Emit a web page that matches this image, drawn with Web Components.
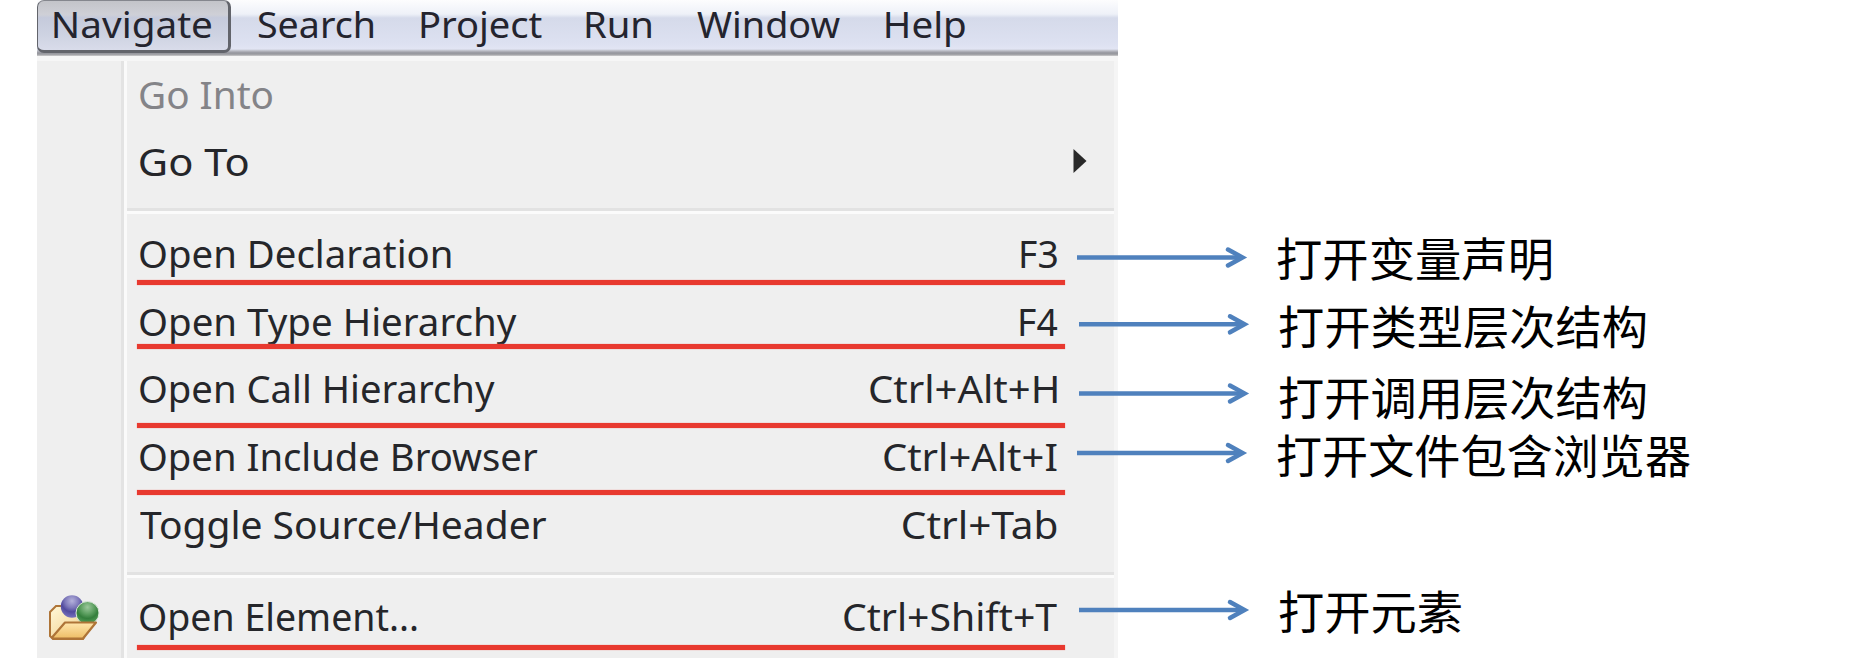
<!DOCTYPE html>
<html lang="zh">
<head>
<meta charset="utf-8">
<title>Navigate menu</title>
<style>
html,body{margin:0;height:100%;overflow:hidden;background:#fff}
body{font-family:"Noto Sans","Noto Sans CJK SC",sans-serif}
</style>
</head>
<body>
<guide-page></guide-page>
<script>
const define = (name, html, setup) => {
  const tpl = document.createElement('template');
  tpl.innerHTML = html;
  customElements.define(name, class extends HTMLElement {
    connectedCallback() {
      if (this.shadowRoot) return;
      this.attachShadow({mode: 'open'}).append(tpl.content.cloneNode(true));
      if (setup) setup(this, this.shadowRoot);
    }
  });
};

/* Text whose visible ink fills exactly the width given in "w". */
define('fit-text', `<style>
:host{display:block;flex:none;white-space:pre}
span{display:inline-block;transform-origin:0 50%}
</style><span></span>`, (el, root) => {
  const span = root.querySelector('span'), text = el.getAttribute('text'), w = +el.getAttribute('w');
  const cs = getComputedStyle(el);
  const ctx = document.createElement('canvas').getContext('2d');
  ctx.font = cs.fontSize + ' ' + cs.fontFamily;
  const m = ctx.measureText(text);
  const s = w / (m.actualBoundingBoxLeft + m.actualBoundingBoxRight);
  span.textContent = text;
  el.style.width = w + 'px';
  span.style.transform = `scaleX(${s}) translateX(${m.actualBoundingBoxLeft}px)`;
});

const barText = (t, w) => `<fit-text text="${t}" w="${w}"></fit-text>`;

define('menu-bar', `<style>
:host{display:block;height:56px;background:linear-gradient(#fdfdfe 0,#eef1f8 14px,#e2e6f1 16px,#d5daea 18px,#dde1f1 44px,#e2e5f4 49px,#b7b8c0 51px,#93949b 53px,#a8a8ac 55px,#d5d5d5 56px)}
nav{display:flex;height:56px;font-size:37px;line-height:48px;color:#24242e}
.on{box-sizing:border-box;width:194px;height:53px;padding-left:16px;margin-right:27px;border:2px solid #62646b;border-top-color:#85878e;border-width:1px 3px 3px 1px;border-radius:7px;
 background:linear-gradient(#c3c4c9,#cfd0d7 28%,#c5cadb 34%,#ced3e2 70%,#d9dcea);line-height:46px}
</style><nav><div class="on">${barText('Navigate',157)}</div>
${barText('Search',115)}<i style="width:48px"></i>${barText('Project',121)}<i style="width:44px"></i>${barText('Run',65)}<i style="width:46px"></i>${barText('Window',143)}<i style="width:46px"></i>${barText('Help',79)}</nav>`);

define('menu-row', `<style>
:host{display:flex;position:relative;height:67.5px;flex:none;line-height:69px;font-size:38px;color:#25262a}
:host([disabled]){color:#848488}
.gutter{width:103px;flex:none;display:flex;align-items:center}
.keys{margin-left:auto;margin-right:61px}
.arrow{margin:1px 30px 0 auto;align-self:center}
.mark{position:absolute;left:100px;width:928px;height:5px;background:#e8392f;box-shadow:0 0 1px #ef8a84}
</style><div class="gutter"><slot></slot></div>`, (el, root) => {
  const a = n => el.getAttribute(n);
  let h = `<fit-text text="${a('label')}" w="${a('w')}"></fit-text>`;
  if (a('keys')) h += `<fit-text class="keys" text="${a('keys')}" w="${a('kw')}"></fit-text>`;
  if (el.hasAttribute('submenu')) h += `<svg class="arrow" width="16" height="26" viewBox="0 0 16 26"><path d="M1.500 1 14.500 13 1.500 25Z" fill="#292929"/></svg>`;
  if (a('mark')) h += `<div class="mark" style="top:${a('mark')}px"></div>`;
  root.querySelector('.gutter').insertAdjacentHTML('afterend', h);
});

define('menu-separator', `<style>
:host{display:flex;flex:none;flex-direction:column;height:24.800px}
div{margin:var(--drop,13px) 4px 0 90px;height:3px;background:#e2e2e2;border-bottom:3px solid #fbfbfb}
</style><div></div>`);

define('element-icon', `<style>:host{display:block;margin:8px 0 0 11px}svg{display:block}</style>
<svg width="52" height="48" viewBox="0 0 52 48">
<defs>
<linearGradient id="b" x2="1" y2="1"><stop stop-color="#fff8d9"/><stop offset="1" stop-color="#efcb83"/></linearGradient>
<linearGradient id="f" x2="0" y2="1"><stop stop-color="#ffe7ad"/><stop offset="1" stop-color="#edbd66"/></linearGradient>
<radialGradient id="p" cy=".25" r=".75"><stop stop-color="#b5b2dc"/><stop offset=".4" stop-color="#7f7abb"/><stop offset=".65" stop-color="#514a9e"/><stop offset="1" stop-color="#7772bd"/></radialGradient>
<radialGradient id="g" cy=".25" r=".75"><stop stop-color="#9cc89c"/><stop offset=".4" stop-color="#5c9f60"/><stop offset=".65" stop-color="#347f3c"/><stop offset="1" stop-color="#59a25d"/></radialGradient>
</defs>
<path d="M2 17 8 11H17L21 16H43V30L35 44H5L2 41Z" fill="url(#b)" stroke="#ae7437" stroke-width="2"/>
<circle cx="24" cy="11.500" r="11.200" fill="url(#p)"/>
<circle cx="39.500" cy="18" r="11.500" fill="url(#g)" stroke="#dbe8db" stroke-width="1"/>
<path d="M4 42.500 17 27.500H48L35 43.500H5Z" fill="url(#f)" stroke="#ae7437" stroke-width="2.200" stroke-linejoin="round"/>
</svg>`);

define('menu-panel', `<style>
:host{display:flex;flex-direction:column;box-sizing:border-box;height:602px;overflow:hidden;padding-top:3.500px;
 background:linear-gradient(#f6f6f6,#f6f6f6) 0 0/100% 5px no-repeat,linear-gradient(#f5f5f5,#f5f5f5) 100% 0/4px 100% no-repeat,
 linear-gradient(90deg,#e3e3e3 0 2.500px,#f0f0f0 2.500px 3px,#fafafa 3px) 84px 5px/6px 100% no-repeat,#efefef}
</style><slot></slot>`);

define('note-row', `<style>
:host{display:flex;height:44px;flex:none;font-size:46px;line-height:44px;color:#000;font-family:"Noto Sans CJK SC",sans-serif}
svg{flex:none;width:172px;height:44px;margin-right:28px;overflow:visible}
fit-text{margin-top:-4px}
</style><svg viewBox="0 0 172 44"><g fill="none" stroke="#4f81bd" stroke-width="4.500"><path d="M0 0H165"/><path d="M151-8 165.500 0 151 8" stroke-linecap="round"/></g></svg>`, (el, root) => {
  root.querySelector('g').setAttribute('transform', `translate(0 ${el.getAttribute('y')})`);
  root.querySelector('svg').insertAdjacentHTML('afterend', `<fit-text text="${el.getAttribute('text')}" w="${el.getAttribute('w')}"></fit-text>`);
});

define('note-list', `<style>
:host{display:flex;flex-direction:column;position:relative;padding-top:238px;margin-left:-41px}
</style><slot></slot>`);

define('guide-page', `<style>
:host{display:flex;width:1858px;height:658px;overflow:hidden;padding-left:37px;box-sizing:border-box;background:#fff}
main{width:1081px;flex:none}
</style>
<main><menu-bar></menu-bar><menu-panel>
<menu-row label="Go Into" w="132" disabled></menu-row>
<menu-row label="Go To" w="107.500" submenu></menu-row>
<menu-separator></menu-separator>
<menu-row label="Open Declaration" w="311" keys="F3" kw="36" mark="60.500"></menu-row>
<menu-row label="Open Type Hierarchy" w="377" keys="F4" kw="37" mark="57.500"></menu-row>
<menu-row label="Open Call Hierarchy" w="355" keys="Ctrl+Alt+H" kw="187" mark="68.500"></menu-row>
<menu-row label="Open Include Browser" w="398" keys="Ctrl+Alt+I" kw="173" mark="68"></menu-row>
<menu-row label="Toggle Source/Header" w="407" keys="Ctrl+Tab" kw="154" style="line-height:71px"></menu-row>
<menu-separator style="--drop:15.500px"></menu-separator>
<menu-row label="Open Element..." w="277" keys="Ctrl+Shift+T" kw="213" mark="63.500"><element-icon></element-icon></menu-row>
</menu-panel></main>
<note-list>
<note-row text="打开变量声明" w="274" y="19.500"></note-row>
<note-row text="打开类型层次结构" w="367" y="18.300" style="margin:23.500px 0 0 2px"></note-row>
<note-row text="打开调用层次结构" w="367" y="16.500" style="margin:27px 0 0 2px"></note-row>
<note-row text="打开文件包含浏览器" w="413" y="18" style="margin-top:14.500px"></note-row>
<note-row text="打开元素" w="182" y="19" style="margin:111.500px 0 0 2px"></note-row>
</note-list>`);
</script>
</body>
</html>
